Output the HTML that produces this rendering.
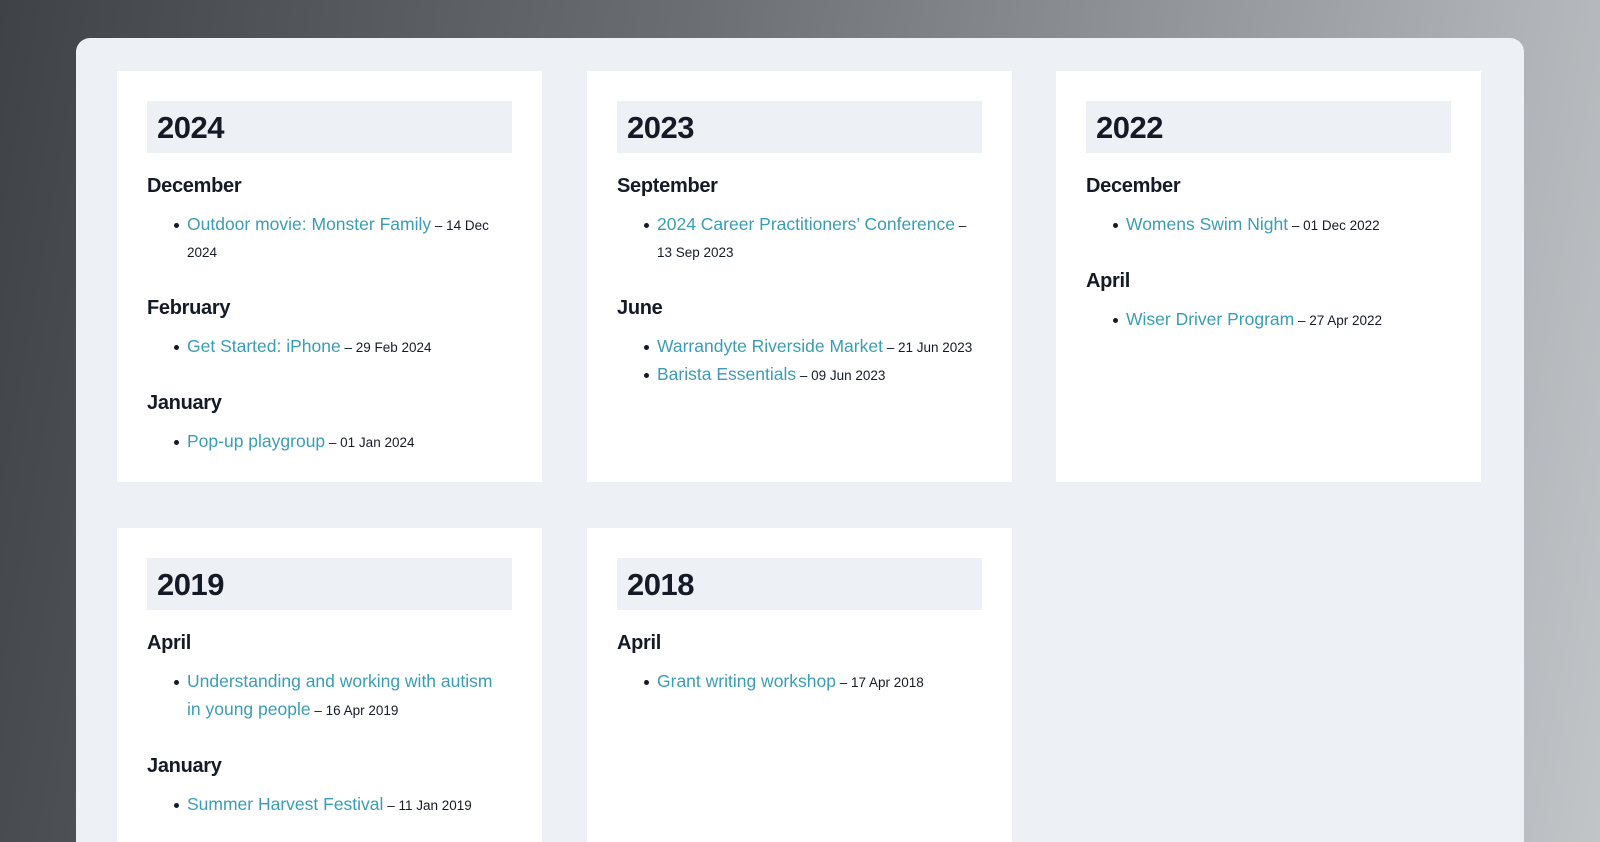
<!DOCTYPE html>
<html style="width:1600px;height:842px;overflow:hidden"><head><style>
*{margin:0;padding:0;box-sizing:border-box}
body{width:1600px;height:842px;overflow:hidden;background:linear-gradient(100deg,#3f4247 0%,#6b6f74 40%,#9da1a5 75%,#c2c5c8 100%);font-family:"Liberation Sans",sans-serif;position:relative}
.panel{position:absolute;left:76px;top:38px;width:1448px;height:804px;background:#edf1f6;border-radius:14px 14px 0 0}
.card{position:absolute;background:#fff;width:425px;padding:30px;overflow:hidden}
.yr{background:#edf1f6;height:52px;padding-left:10px;font-size:31px;font-weight:bold;line-height:54px;color:#151b26;letter-spacing:-0.5px}
h3{font-size:20px;font-weight:bold;color:#151b26;line-height:26px;margin-top:20px;letter-spacing:-0.3px}
h3.n{margin-top:29px}
ul{list-style:none;margin-top:12px}
li{position:relative;padding-left:40px;line-height:27px;white-space:nowrap;color:#151b26;font-size:13.5px}
li:before{content:"";position:absolute;left:27px;top:12px;width:5px;height:5px;border-radius:50%;background:#151b26}
a{color:#3a9db5;text-decoration:none;font-size:17.5px}
</style></head><body>
<div class="panel"></div>
<div class="card" style="left:117px;top:71px;height:411px">
<div class="yr">2024</div>
<h3>December</h3>
<ul><li><a>Outdoor movie: Monster Family</a> – 14 Dec<br>2024</li></ul>
<h3 class="n">February</h3>
<ul><li><a>Get Started: iPhone</a> – 29 Feb 2024</li></ul>
<h3 class="n">January</h3>
<ul><li><a>Pop-up playgroup</a> – 01 Jan 2024</li></ul>
</div>
<div class="card" style="left:587px;top:71px;height:411px">
<div class="yr">2023</div>
<h3>September</h3>
<ul><li><a>2024 Career Practitioners’ Conference</a> –<br>13 Sep 2023</li></ul>
<h3 class="n">June</h3>
<ul><li><a>Warrandyte Riverside Market</a> – 21 Jun 2023</li><li><a>Barista Essentials</a> – 09 Jun 2023</li></ul>
</div>
<div class="card" style="left:1056px;top:71px;height:411px">
<div class="yr">2022</div>
<h3>December</h3>
<ul><li><a>Womens Swim Night</a> – 01 Dec 2022</li></ul>
<h3 class="n">April</h3>
<ul><li><a>Wiser Driver Program</a> – 27 Apr 2022</li></ul>
</div>
<div class="card" style="left:117px;top:528px;height:314px">
<div class="yr">2019</div>
<h3>April</h3>
<ul><li><a>Understanding and working with autism</a><br><a>in young people</a> – 16 Apr 2019</li></ul>
<h3 class="n">January</h3>
<ul><li><a>Summer Harvest Festival</a> – 11 Jan 2019</li></ul>
</div>
<div class="card" style="left:587px;top:528px;height:314px">
<div class="yr">2018</div>
<h3>April</h3>
<ul><li><a>Grant writing workshop</a> – 17 Apr 2018</li></ul>
</div>
</body></html>
